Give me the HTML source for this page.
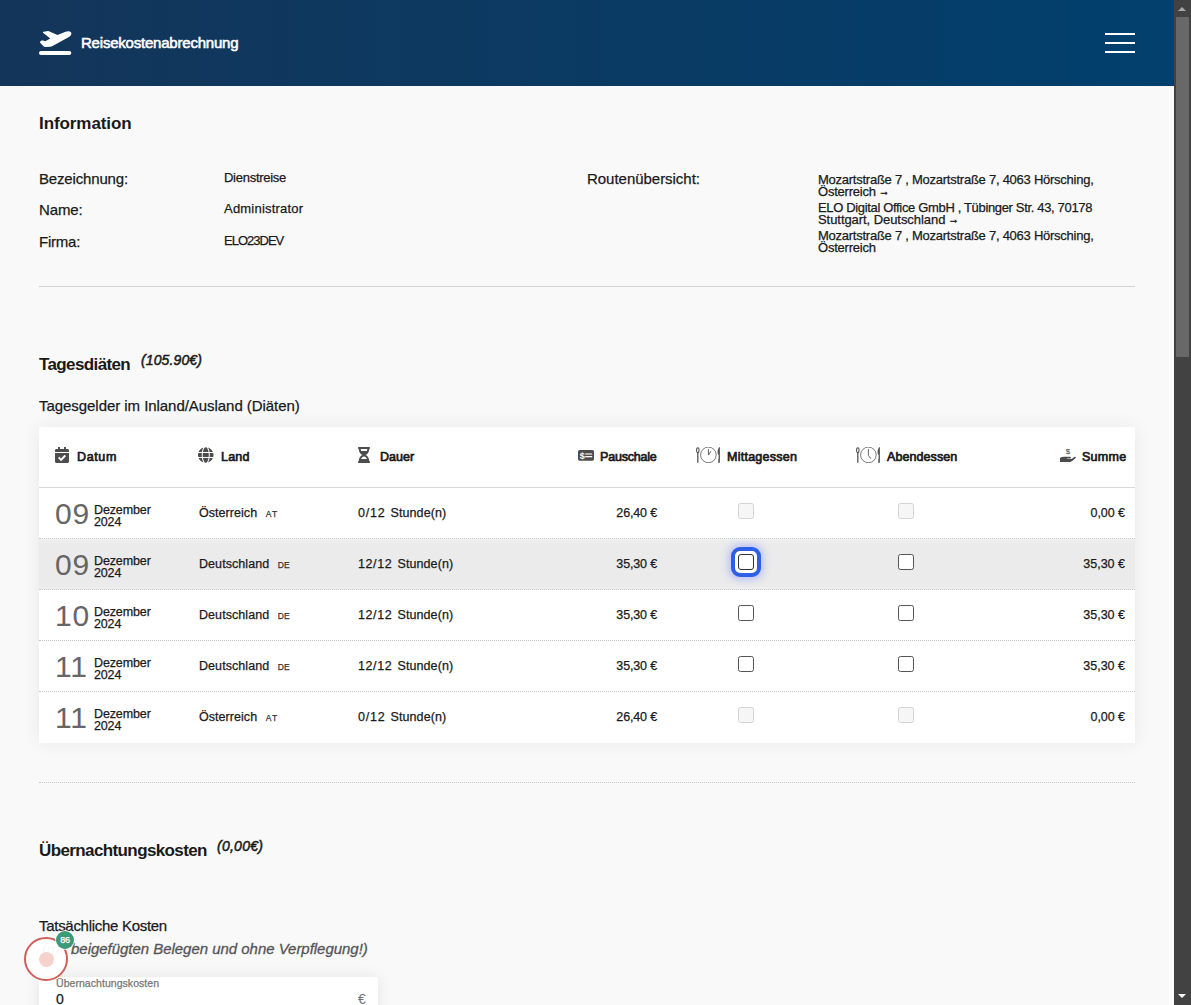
<!DOCTYPE html><html lang="de"><head>
<meta charset="utf-8">
<title>Reisekostenabrechnung</title>
<style>
*{box-sizing:border-box}
html,body{margin:0;padding:0}
body{width:1191px;height:1005px;overflow:hidden;position:relative;background:#f9f9f9;
  font-family:"Liberation Sans",sans-serif;color:#1a1a1a;font-size:13px;-webkit-text-stroke:.25px}
.abs{position:absolute;white-space:nowrap;line-height:1}
/* header */
#hdr{position:absolute;left:0;top:0;width:1174px;height:86px;
  background:linear-gradient(90deg,#14355a 0%,#0a3a62 50%,#02406e 100%)}
#logo{position:absolute;left:39px;top:30px}
#title{-webkit-text-stroke:.55px #fff;left:81px;top:35px;font-size:15px;font-weight:normal;color:#fff;letter-spacing:-.55px}
#burger{position:absolute;left:1105px;top:32px;width:30px;height:22px}
#burger i{position:absolute;left:0;width:30px;height:2px;background:#fff}
/* scrollbar */
#sb{position:absolute;left:1174px;top:0;width:17px;height:1005px;background:#424242}
#sb .th{position:absolute;left:2px;top:17px;width:13px;height:340px;background:#686868}
#sb .up{position:absolute;left:4px;top:7px;width:0;height:0;border-left:4.5px solid transparent;border-right:4.5px solid transparent;border-bottom:4.5px solid #a8a8a8}
#sb .dn{position:absolute;left:4px;top:994px;width:0;height:0;border-left:4.5px solid transparent;border-right:4.5px solid transparent;border-top:4.5px solid #fff}
/* headings */
.h2{-webkit-text-stroke:0;font-size:17px;font-weight:bold;color:#1a1a1a;letter-spacing:-.45px}
.lbl{font-size:15px;letter-spacing:-.3px}
.val{font-size:13px;letter-spacing:-.25px}
.sum{font-size:14px;font-style:italic;letter-spacing:-.3px;-webkit-text-stroke:.5px}
hr.l{position:absolute;left:39px;width:1096px;height:0;margin:0;border:0;border-top:1px solid #d2d2d2}
hr.d{position:absolute;left:39px;width:1096px;height:0;margin:0;border:0;border-top:1px dotted #cacaca}
#route{position:absolute;left:818px;top:174px;width:320px;font-size:13px;line-height:12px;letter-spacing:-.25px}
#route div{margin-bottom:4px}
.ar{font-size:11px;line-height:0;letter-spacing:0;-webkit-text-stroke:.4px;position:relative;top:-1.500px}

/* table card */
#card{position:absolute;left:39px;top:427px;width:1096px;height:316px;background:#fff;box-shadow:0 0 18px rgba(0,0,0,.07)}
#thead{position:absolute;left:0;top:0;width:1096px;height:61px;border-bottom:1px solid #d9d9d9}
#thead svg{position:absolute}
.th{-webkit-text-stroke:.7px;font-size:12.5px;font-weight:normal;color:#1a1a1a;top:24px;letter-spacing:-.4px}
.row{position:absolute;left:0;width:1096px;height:51px;border-bottom:1px dotted #c6c6c6}
.row.last{border-bottom:0}
.row.hl{background:linear-gradient(#f1f1f1 0,#ededed 2px,#ebebeb 5px,#ebebeb 46px,#eeeeee 49px,#f0f0f0 50px)}
.day{-webkit-text-stroke:0;left:16px;top:11px;font-size:30px;color:#666;letter-spacing:.8px}
.my{left:55px;top:16px;font-size:12.5px;line-height:12px;letter-spacing:-.15px}
.cty{left:160px;top:19px;font-size:12.5px;letter-spacing:-.15px}
.cc{font-size:8.5px;letter-spacing:.5px;color:#333;margin-left:8.5px;position:relative;top:0}
.st{margin-left:5.200px}
.dur{left:319px;top:19px;font-size:12.5px;letter-spacing:-.1px}
.pau{right:478px;top:19px;font-size:12.5px;letter-spacing:-.1px}
.tot{right:10px;top:19px;font-size:12.5px;letter-spacing:-.1px}
input.cb{position:absolute;top:15px;width:16px;height:16px;margin:0;padding:0;-webkit-appearance:none;appearance:none;
  background:#fff;border:1px solid #555;border-radius:2.5px}
input.cb:disabled{background:#f6f6f6;border-color:#d4d4d4}
input.c1{left:699px}
input.c2{left:859px}
.ring{position:absolute;left:692px;top:8px;width:30px;height:30px;border:4px solid #2e5fe6;border-radius:9px;background:#fff;
  box-shadow:0 0 7px 3px rgba(125,140,255,.42)}
.hl input.c1{border:1.500px solid #333;border-radius:3px}

/* bottom */
.note{font-size:15px;font-style:italic;color:#555;letter-spacing:-.2px;-webkit-text-stroke:.3px #555}
#inp{position:absolute;left:39px;top:977px;width:339px;height:60px;background:#fff;box-shadow:0 0 16px rgba(0,0,0,.09);border-radius:2px}
#inp .fl{left:17px;top:1px;font-size:10.5px;color:#767676;letter-spacing:-.2px}
#inp .v{left:17px;top:15px;font-size:14px;color:#1a1a1a}
#inp .eu{left:319px;top:15px;font-size:14px;color:#707070;-webkit-text-stroke:0}
/* floating recorder widget */
#fab{position:absolute;left:24px;top:937px;width:44px;height:44px;border-radius:50%;border:2px solid #cf5f58;background:rgba(255,255,255,.96)}
#fab i{position:absolute;left:12.500px;top:12.500px;width:15px;height:15px;border-radius:50%;background:#f6d2cd}
#badge{position:absolute;left:56px;top:931px;width:18px;height:18px;border-radius:50%;background:#3c9a78;color:#fff;font-size:9px;line-height:18px;text-align:center;letter-spacing:-.3px;box-shadow:0 0 0 1px rgba(255,255,255,.75)}
</style>
</head>
<body>

<div id="hdr">
  <svg id="logo" width="34" height="27" viewBox="0 0 34 27">
    <rect x="0" y="21" width="32.300" height="4" rx="2" fill="#fff"></rect>
    <path fill="#fff" d="M4 2.800Q3.500 1.900 4.600 1.700L9 1.100Q9.800 1 10.500 1.400L18.500 4.900 26.500 1.800C29 .8 31.500 1.200 32.300 2.800 33 4.300 31.500 6.200 29 7.600L14 15.800Q12.500 16.600 11 16.700L6.500 17Q5 17 4 15.800L1.200 12.800Q.6 12 1.500 11.300L2.500 10.600Q3.200 10.200 4 10.600L6.300 11.200 11.300 8.500z"></path>
  </svg>
  <div class="abs" id="title" style="letter-spacing: -0.21px;">Reisekostenabrechnung</div>
  <div id="burger"><i style="top:1px"></i><i style="top:10px"></i><i style="top:19px"></i></div>
</div>

<div style="position:absolute;left:1169px;top:86px;width:5px;height:919px;background:#fcfcfc"></div>
<div id="sb"><div class="up"></div><div class="th"></div><div class="dn"></div></div>

<!-- Information -->
<div class="abs h2" id="x_info" style="left: 39px; top: 115px; letter-spacing: -0.08px;">Information</div>

<div class="abs lbl" id="x_bez" style="left: 39px; top: 171px; letter-spacing: -0.16px;">Bezeichnung:</div>
<div class="abs lbl" id="x_name" style="left: 39px; top: 202px; letter-spacing: -0.1px;">Name:</div>
<div class="abs lbl" id="x_firma" style="left: 39px; top: 234px; letter-spacing: -0.24px;">Firma:</div>
<div class="abs val" id="x_v1" style="left: 224px; top: 171px; letter-spacing: -0.27px;">Dienstreise</div>
<div class="abs val" id="x_v2" style="left: 224px; top: 202px; letter-spacing: 0.21px;">Administrator</div>
<div class="abs val" id="x_v3" style="left: 224px; top: 234px; letter-spacing: -0.99px;">ELO23DEV</div>

<div class="abs lbl" id="x_route" style="left: 587px; top: 171px; letter-spacing: -0.03px;">Routenübersicht:</div>
<div id="route">
  <div><span id="x_r1" style="letter-spacing: -0.25px;">Mozartstraße 7 , Mozartstraße 7, 4063 Hörsching,</span><br><span id="x_r2" style="letter-spacing: -0.23px;">Österreich</span><span class="ar"> →</span></div>
  <div><span id="x_r3" style="letter-spacing: -0.34px;">ELO Digital Office GmbH , Tübinger Str. 43, 70178</span><br><span id="x_r4" style="letter-spacing: -0.06px;">Stuttgart, Deutschland</span><span class="ar"> →</span></div>
  <div><span id="x_r5" style="letter-spacing: -0.25px;">Mozartstraße 7 , Mozartstraße 7, 4063 Hörsching,</span><br><span id="x_r6" style="letter-spacing: -0.23px;">Österreich</span></div>
</div>

<hr class="l" style="top:286px">

<!-- Tagesdiäten -->
<div class="abs h2" id="x_tag" style="left: 39px; top: 356px; letter-spacing: -0.62px;">Tagesdiäten</div>
<div class="abs sum" id="x_s1" style="left: 141px; top: 353px; letter-spacing: 0.12px;">(105.90€)</div>
<div class="abs lbl" id="x_tg" style="left: 39px; top: 398px; letter-spacing: -0.05px;">Tagesgelder im Inland/Ausland (Diäten)</div>
<div id="card">
 <div id="thead">
  <svg style="left:16px;top:20px" width="14" height="16" viewBox="0 0 448 512"><path fill="#4d4d4d" d="M436 160H12c-6.627 0-12-5.373-12-12v-36c0-26.51 21.49-48 48-48h48V12c0-6.627 5.373-12 12-12h40c6.627 0 12 5.373 12 12v52h128V12c0-6.627 5.373-12 12-12h40c6.627 0 12 5.373 12 12v52h48c26.51 0 48 21.49 48 48v36c0 6.627-5.373 12-12 12zM12 192h424c6.627 0 12 5.373 12 12v260c0 26.51-21.49 48-48 48H48c-26.51 0-48-21.49-48-48V204c0-6.627 5.373-12 12-12zm333.296 95.947l-28.169-28.398c-4.667-4.705-12.265-4.736-16.97-.068L194.12 364.665l-45.98-46.352c-4.667-4.705-12.266-4.736-16.971-.068l-28.397 28.17c-4.705 4.667-4.736 12.265-.068 16.97l82.601 83.269c4.667 4.705 12.265 4.736 16.97.068l142.953-141.805c4.705-4.667 4.736-12.265.068-16.97z"></path></svg>
  <svg style="left:159px;top:20px" width="15.5" height="16" viewBox="0 0 496 512"><path fill="#4d4d4d" d="M336.5 160C322 70.7 287.8 8 248 8s-74 62.7-88.5 152h177zM152 256c0 22.2 1.2 43.5 3.3 64h185.3c2.100-20.500 3.300-41.800 3.300-64s-1.200-43.500-3.300-64H155.300c-2.100 20.500-3.300 41.800-3.300 64zm324.700-96c-28.600-67.900-86.500-120.400-158-141.600 24.400 33.800 41.200 84.700 50 141.600h108zM177.200 18.400C105.800 39.600 47.800 92.100 19.300 160h108c8.700-56.900 25.500-107.800 49.900-141.600zM487.400 192H372.700c2.100 21 3.300 42.500 3.300 64s-1.200 43-3.300 64h114.600c5.500-20.500 8.600-41.800 8.600-64s-3.100-43.500-8.500-64zM120 256c0-21.500 1.200-43 3.300-64H8.600C3.200 212.500 0 233.800 0 256s3.200 43.500 8.600 64h114.600c-2-21-3.200-42.500-3.200-64zm39.500 96c14.500 89.300 48.700 152 88.500 152s74-62.700 88.500-152h-177zm159.300 141.600c71.400-21.200 129.400-73.700 158-141.600h-108c-8.800 56.900-25.600 107.800-50 141.600zM19.300 352c28.600 67.900 86.500 120.400 158 141.600-24.400-33.800-41.200-84.700-50-141.600h-108z"></path></svg>
  <svg style="left:319px;top:20px" width="12" height="16" viewBox="0 0 384 512"><path fill="#4d4d4d" d="M360 0H24C10.745 0 0 10.745 0 24v16c0 13.255 10.745 24 24 24 0 90.965 51.016 167.734 120.842 192C75.016 280.266 24 357.035 24 448c-13.255 0-24 10.745-24 24v16c0 13.255 10.745 24 24 24h336c13.255 0 24-10.745 24-24v-16c0-13.255-10.745-24-24-24 0-90.965-51.016-167.734-120.842-192C308.984 231.734 360 154.965 360 64c13.255 0 24-10.745 24-24V24c0-13.255-10.745-24-24-24zm-75.078 384H99.080c17.059-46.797 52.096-80 92.920-80 40.821 0 75.862 33.196 92.922 80zm.019-256H99.078C91.988 108.548 88 86.748 88 64h208c0 22.805-3.987 44.587-11.059 64z"></path></svg>
  <svg style="left:539px;top:23px" width="16" height="11" viewBox="0 0 16 11"><rect x="0" y="0" width="16" height="10.700" rx="1.6" fill="#4d4d4d"></rect><text x="1.700" y="8.600" font-family="Liberation Sans, sans-serif" font-size="9" font-weight="bold" fill="#fff">$</text><rect x="7.200" y="3.300" width="7" height="1.400" fill="#d8d8d8"></rect><rect x="7.200" y="6" width="7" height="1.300" fill="#fff"></rect></svg>
  <svg style="left:657px;top:20.400px" width="24" height="16" viewBox="0 0 24 16"><ellipse cx="1.800" cy="3.200" rx="1.250" ry="2.400" fill="none" stroke="#555" stroke-width="1.100"></ellipse><path d="M1.800 5.600V15.700" stroke="#555" stroke-width="1.300" fill="none"></path><circle cx="12.400" cy="7.900" r="7.800" fill="none" stroke="#7a7a7a" stroke-width="1"></circle><path d="M12.400 1.900V8.100L14.900 4.200" stroke="#555" stroke-width=".9" fill="none" stroke-linejoin="round"></path><path d="M23.600 .1C21.800 1.300 21.300 4.300 21.700 6.500L22.700 8.500 22.100 15.700H23.900V.1z" fill="#555"></path></svg>
  <svg style="left:817px;top:20.400px" width="24" height="16" viewBox="0 0 24 16"><ellipse cx="1.800" cy="3.200" rx="1.250" ry="2.400" fill="none" stroke="#555" stroke-width="1.100"></ellipse><path d="M1.800 5.600V15.700" stroke="#555" stroke-width="1.300" fill="none"></path><circle cx="12.400" cy="7.900" r="7.800" fill="none" stroke="#7a7a7a" stroke-width="1"></circle><path d="M12.400 1.900V8.400L14.900 11.700" stroke="#555" stroke-width=".9" fill="none" stroke-linejoin="round"></path><path d="M23.600 .1C21.800 1.300 21.300 4.300 21.700 6.500L22.700 8.500 22.100 15.700H23.900V.1z" fill="#555"></path></svg>
  <svg style="left:1021px;top:21px" width="16" height="14" viewBox="0 0 16 14"><text x="5.800" y="6.400" font-family="Liberation Sans, sans-serif" font-size="8" fill="#3a3a3a">$</text><path fill="#4d4d4d" d="M0 10C1.500 9 3 8.800 5 8.800H10C11 8.800 11.200 9.700 10.600 10.200 10.300 10.500 9.500 10.600 8.500 10.600H7V11H10.500C11.500 11 12.200 10.600 13 10L14.600 8.800C15.300 8.400 16 9 15.800 9.700 15.700 10 15.300 10.400 14.800 10.800L12.500 12.800C11.800 13.500 11 13.900 10 13.900H0z"></path></svg>
  <div class="abs th t1" style="left: 38px; letter-spacing: 0.64px;">Datum</div>
  <div class="abs th t2" style="left: 182px; letter-spacing: 0.23px;">Land</div>
  <div class="abs th t3" style="left: 341px; letter-spacing: 0.01px;">Dauer</div>
  <div class="abs th t4" style="left: 561px; letter-spacing: -0.2px;">Pauschale</div>
  <div class="abs th t5" style="left: 688px; letter-spacing: 0.25px;">Mittagessen</div>
  <div class="abs th t6" style="left: 848px; letter-spacing: 0.08px;">Abendessen</div>
  <div class="abs th t7" style="left: 1043px; letter-spacing: 0.26px;">Summe</div>
 </div>
 <div class="row" style="top:61px">
  <div class="abs day">09</div>
  <div class="abs my"><span class="m" style="letter-spacing: -0.12px;">Dezember</span><br><span class="y" style="letter-spacing: -0.14px;">2024</span></div>
  <div class="abs cty"><span class="cn" style="letter-spacing: 0.05px;">Österreich</span><span class="cc" style="letter-spacing: 1.27px;">AT</span></div>
  <div class="abs dur"><span class="dn" style="letter-spacing: 0.75px;">0/12</span><span class="st" style="letter-spacing: 0.09px;">Stunde(n)</span></div>
  <div class="abs pau" style="letter-spacing: -0.15px;">26,40 €</div>
  <input type="checkbox" class="cb c1" disabled="">
  <input type="checkbox" class="cb c2" disabled="">
  <div class="abs tot" style="letter-spacing: -0.05px;">0,00 €</div>
 </div>
 <div class="row hl" style="top:112px">
  <div class="abs day">09</div>
  <div class="abs my"><span class="m" style="letter-spacing: -0.12px;">Dezember</span><br><span class="y" style="letter-spacing: -0.14px;">2024</span></div>
  <div class="abs cty"><span class="cn" style="letter-spacing: 0.07px;">Deutschland</span><span class="cc" style="letter-spacing: 0.09px;">DE</span></div>
  <div class="abs dur"><span class="dn" style="letter-spacing: 0.6px;">12/12</span><span class="st" style="letter-spacing: 0.09px;">Stunde(n)</span></div>
  <div class="abs pau" style="letter-spacing: -0.15px;">35,30 €</div>
  <div class="ring"></div>
  <input type="checkbox" class="cb c1">
  <input type="checkbox" class="cb c2">
  <div class="abs tot" style="letter-spacing: 0px;">35,30 €</div>
 </div>
 <div class="row" style="top:163px">
  <div class="abs day">10</div>
  <div class="abs my"><span class="m" style="letter-spacing: -0.12px;">Dezember</span><br><span class="y" style="letter-spacing: -0.14px;">2024</span></div>
  <div class="abs cty"><span class="cn" style="letter-spacing: 0.07px;">Deutschland</span><span class="cc" style="letter-spacing: 0.09px;">DE</span></div>
  <div class="abs dur"><span class="dn" style="letter-spacing: 0.6px;">12/12</span><span class="st" style="letter-spacing: 0.09px;">Stunde(n)</span></div>
  <div class="abs pau" style="letter-spacing: -0.15px;">35,30 €</div>
  <input type="checkbox" class="cb c1">
  <input type="checkbox" class="cb c2">
  <div class="abs tot" style="letter-spacing: 0px;">35,30 €</div>
 </div>
 <div class="row" style="top:214px">
  <div class="abs day">11</div>
  <div class="abs my"><span class="m" style="letter-spacing: -0.12px;">Dezember</span><br><span class="y" style="letter-spacing: -0.14px;">2024</span></div>
  <div class="abs cty"><span class="cn" style="letter-spacing: 0.07px;">Deutschland</span><span class="cc" style="letter-spacing: 0.09px;">DE</span></div>
  <div class="abs dur"><span class="dn" style="letter-spacing: 0.6px;">12/12</span><span class="st" style="letter-spacing: 0.09px;">Stunde(n)</span></div>
  <div class="abs pau" style="letter-spacing: -0.15px;">35,30 €</div>
  <input type="checkbox" class="cb c1">
  <input type="checkbox" class="cb c2">
  <div class="abs tot" style="letter-spacing: 0px;">35,30 €</div>
 </div>
 <div class="row last" style="top:265px">
  <div class="abs day">11</div>
  <div class="abs my"><span class="m" style="letter-spacing: -0.12px;">Dezember</span><br><span class="y" style="letter-spacing: -0.14px;">2024</span></div>
  <div class="abs cty"><span class="cn" style="letter-spacing: 0.05px;">Österreich</span><span class="cc" style="letter-spacing: 1.27px;">AT</span></div>
  <div class="abs dur"><span class="dn" style="letter-spacing: 0.75px;">0/12</span><span class="st" style="letter-spacing: 0.09px;">Stunde(n)</span></div>
  <div class="abs pau" style="letter-spacing: -0.15px;">26,40 €</div>
  <input type="checkbox" class="cb c1" disabled="">
  <input type="checkbox" class="cb c2" disabled="">
  <div class="abs tot" style="letter-spacing: -0.05px;">0,00 €</div>
 </div>
</div>
<hr class="d" style="top:782px">

<!-- Übernachtungskosten -->
<div class="abs h2" id="x_ueb" style="left: 39px; top: 842px; letter-spacing: -0.61px;">Übernachtungskosten</div>
<div class="abs sum" id="x_s2" style="left: 217px; top: 839px; letter-spacing: 0.26px;">(0,00€)</div>
<div class="abs lbl" id="x_tk" style="left: 39px; top: 918px; letter-spacing: -0.29px;">Tatsächliche Kosten</div>
<div class="abs note" id="x_note" style="left: 42px; top: 941px; letter-spacing: -0.03px;">(mit beigefügten Belegen und ohne Verpflegung!)</div>
<div id="inp">
  <div class="abs fl" id="x_fl" style="letter-spacing: 0.05px;">Übernachtungskosten</div>
  <div class="abs v">0</div>
  <div class="abs eu">€</div>
</div>
<div id="fab"><i></i></div>
<div id="badge">86</div>



</body></html>
